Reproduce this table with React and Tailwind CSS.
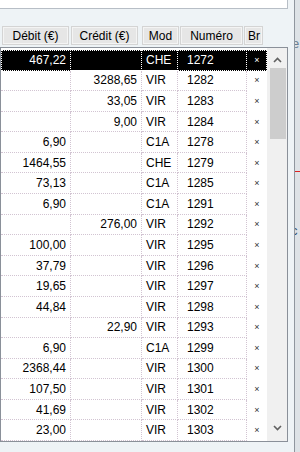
import React from "react";

const rows = [
  ["467,22", "", "CHE", "1272"],
  ["", "3288,65", "VIR", "1282"],
  ["", "33,05", "VIR", "1283"],
  ["", "9,00", "VIR", "1284"],
  ["6,90", "", "C1A", "1278"],
  ["1464,55", "", "CHE", "1279"],
  ["73,13", "", "C1A", "1285"],
  ["6,90", "", "C1A", "1291"],
  ["", "276,00", "VIR", "1292"],
  ["100,00", "", "VIR", "1295"],
  ["37,79", "", "VIR", "1296"],
  ["19,65", "", "VIR", "1297"],
  ["44,84", "", "VIR", "1298"],
  ["", "22,90", "VIR", "1293"],
  ["6,90", "", "C1A", "1299"],
  ["2368,44", "", "VIR", "1300"],
  ["107,50", "", "VIR", "1301"],
  ["41,69", "", "VIR", "1302"],
  ["23,00", "", "VIR", "1303"],
];

function Chevron({ up }) {
  return (
    <svg width="9" height="6" viewBox="0 0 9 6">
      <polyline
        points={up ? "1,5 4.5,1.5 8,5" : "1,1 4.5,4.5 8,1"}
        fill="none"
        stroke="#606060"
        strokeWidth="1.6"
      />
    </svg>
  );
}

function Row({ r, selected }) {
  const line = selected ? "border-white" : "border-[#d2c4d2]";
  const cell = `h-full flex items-center border-r border-b border-dotted ${line}`;
  return (
    <div
      className={`h-[20.6px] flex ${
        selected ? "bg-black text-white outline outline-1 outline-dotted outline-white -outline-offset-1" : "text-black"
      }`}
    >
      <div className={`${cell} w-[70px] justify-end pr-[4px]`}>{r[0]}</div>
      <div className={`${cell} w-[71px] justify-end pr-[4px]`}>{r[1]}</div>
      <div className={`${cell} w-[36px] pl-[4px]`}>{r[2]}</div>
      <div className={`${cell} w-[69px] pl-[9px]`}>{r[3]}</div>
      <div
        className={`h-full w-[20px] flex items-center justify-center text-[9px] ${
          selected ? "" : "text-[#333]"
        }`}
      >
        ×
      </div>
    </div>
  );
}

function HeadBtn({ w, children, left }) {
  return (
    <div
      className={`h-[17px] ${w} bg-[#e6e6e6] border border-[#f4f4f4] shadow-[0_0_0_1px_#d4d4d4] flex items-center ${
        left ? "pl-[2px]" : "justify-center"
      }`}
    >
      {children}
    </div>
  );
}

export default function App() {
  return (
    <div className="w-[300px] h-[452px] bg-[#eef3f6] flex overflow-hidden font-['Liberation_Sans',Arial,sans-serif] text-[12px] leading-none">
      <div className="w-[288px] shrink-0 flex flex-col">
        <div className="h-[9px] bg-white border-b border-r border-[#b7bec6]" />
        <div className="h-[18px]" />
        <div className="flex items-center h-[17px] pl-[3px]">
          <HeadBtn w="w-[65px]">Débit (€)</HeadBtn>
          <div className="w-[4px]" />
          <HeadBtn w="w-[65px]">Crédit (€)</HeadBtn>
          <div className="w-[6px]" />
          <HeadBtn w="w-[35px]">Mod</HeadBtn>
          <div className="w-[3px]" />
          <HeadBtn w="w-[61px]">Numéro</HeadBtn>
          <div className="w-[3px]" />
          <HeadBtn w="w-[17px]" left>
            Br
          </HeadBtn>
        </div>
        <div className="h-[3px]" />
        <div className="h-[395px] bg-white border border-[#8a9099] flex overflow-hidden">
          <div className="w-[266px] pt-[2px] flex flex-col">
            {rows.map((r, i) => (
              <Row key={i} r={r} selected={i === 0} />
            ))}
          </div>
          <div className="w-[20px] bg-[#f0f0f0] flex flex-col">
            <div className="h-[20px] flex items-center justify-center pt-[4px]">
              <Chevron up />
            </div>
            <div className="h-[71px] bg-[#cdcdcd] ml-[3px] mr-[1px]" />
            <div className="flex-1" />
            <div className="h-[20px] flex items-center justify-center pb-[6px]">
              <Chevron />
            </div>
          </div>
        </div>
      </div>
      <div className="w-[6px] shrink-0" />
      <div className="w-[1px] shrink-0 bg-[#8f969e]" />
      <div className="flex-1 bg-[#dde2e6] flex flex-col overflow-hidden">
        <div className="h-[37px]" />
        <div className="h-[14px] -ml-[3px] text-[#6b7f92] text-[13px]">e</div>
        <div className="h-[120px]" />
        <div className="h-[1px] bg-[#d22]" />
        <div className="h-[52px]" />
        <div className="h-[14px] -ml-[4px] text-[#3b5370] text-[13px]">c</div>
      </div>
    </div>
  );
}
